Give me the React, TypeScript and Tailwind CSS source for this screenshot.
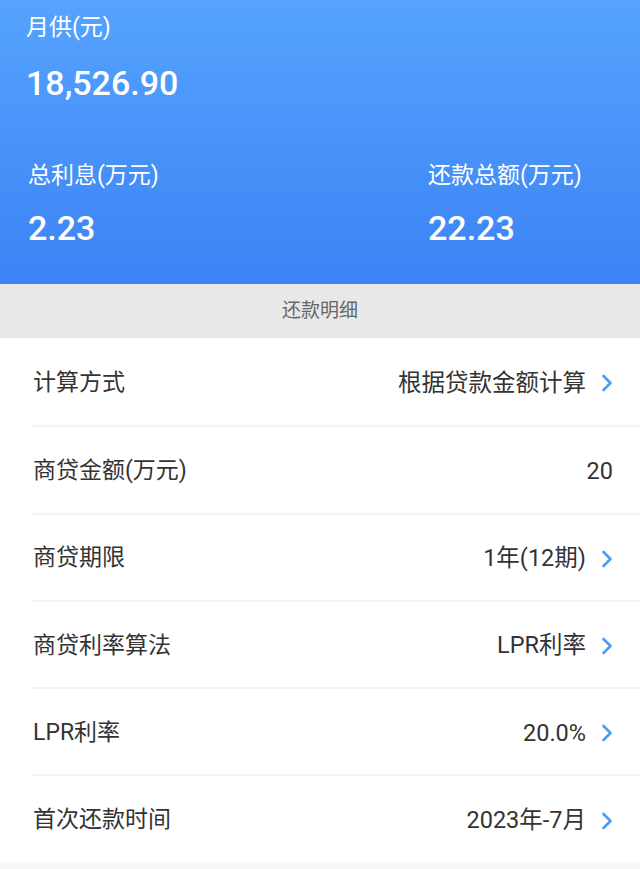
import React from "react";

interface Row {
  label: string;
  value: string;
  arrow: boolean;
}

const rows: Row[] = [
  { label: "计算方式", value: "根据贷款金额计算", arrow: true },
  { label: "商贷金额(万元)", value: "20", arrow: false },
  { label: "商贷期限", value: "1年(12期)", arrow: true },
  { label: "商贷利率算法", value: "LPR利率", arrow: true },
  { label: "LPR利率", value: "20.0%", arrow: true },
  { label: "首次还款时间", value: "2023年-7月", arrow: true },
];

function Chevron() {
  return (
    <svg width="12" height="18" viewBox="0 0 12 18" className="ml-[15px] shrink-0">
      <polyline
        points="2.5,2 9.5,9 2.5,16"
        fill="none"
        stroke="#4a9df0"
        strokeWidth="2.6"
        strokeLinecap="round"
        strokeLinejoin="round"
      />
    </svg>
  );
}

export default function App() {
  return (
    <div className="w-[640px] h-[869px] overflow-hidden bg-[#f7f9f9] font-['Roboto','Noto_Sans_CJK_SC',sans-serif]">
      <header className="h-[284px] bg-gradient-to-b from-[#55a3fe] to-[#3c83f4] text-white">
        <div className="pl-[26px] pt-[12px]">
          <div className="text-[23px] leading-[32px]">月供(元)</div>
          <div className="mt-[17px] text-[34px] leading-[44px] font-medium">18,526.90</div>
        </div>
        <div className="flex pl-[28px] mt-[55px]">
          <div className="w-[400px]">
            <div className="text-[23px] leading-[32px]">总利息(万元)</div>
            <div className="mt-[14px] text-[34px] leading-[44px] font-medium">2.23</div>
          </div>
          <div>
            <div className="text-[23px] leading-[32px]">还款总额(万元)</div>
            <div className="mt-[14px] text-[34px] leading-[44px] font-medium">22.23</div>
          </div>
        </div>
      </header>

      <div className="h-[54px] bg-[#e8e8e8] flex items-center justify-center text-[19px] text-[#666]">
        还款明细
      </div>

      <ul className="bg-white">
        {rows.map((r, i) => (
          <li key={r.label} className="pl-[33px]">
            <div
              className={
                "h-[87.3px] flex items-center pt-[3px] pr-[27px] " +
                (i > 0 ? "border-t-2 border-[#f3f3f3]" : "")
              }
            >
              <span className="flex-1 text-[23px] text-[#333]">{r.label}</span>
              <span className="text-[23.5px] text-[#333]">{r.value}</span>
              {r.arrow ? <Chevron /> : null}
            </div>
          </li>
        ))}
      </ul>
    </div>
  );
}
